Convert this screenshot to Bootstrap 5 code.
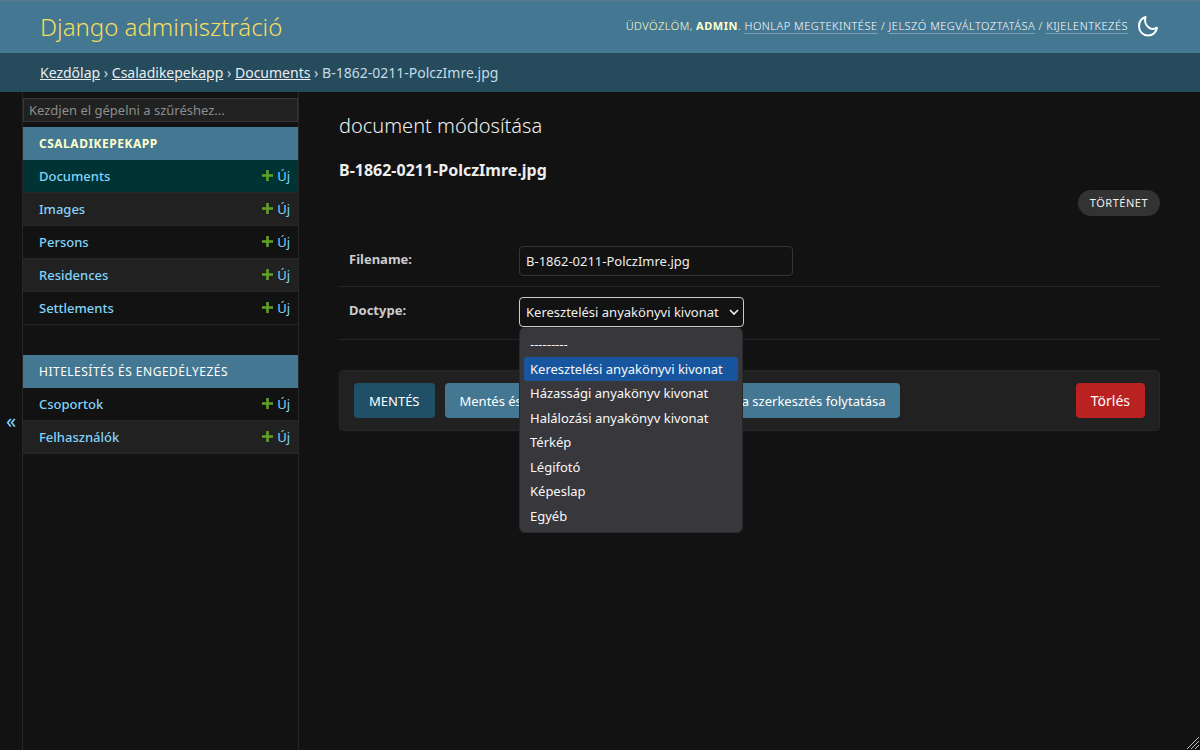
<!DOCTYPE html>
<html lang="hu" data-bs-theme="dark">
<head>
<meta charset="utf-8">
<meta name="viewport" content="width=device-width, initial-scale=1">
<title>B-1862-0211-PolczImre.jpg | document módosítása | Django adminisztráció</title>
<link rel="stylesheet" href="https://cdn.jsdelivr.net/npm/bootstrap@5.3.0/dist/css/bootstrap.min.css">
<style>
:root { --primary: #447792; --hairline: #272727; --line: #353535; --darkened: #212121; --admin-link: #81d4fa; }
body { font-family: "Noto Sans", sans-serif; font-size: 13px; line-height: 18px; background: #121212; color: #eee; }
a { color: var(--admin-link); text-decoration: none; }
.site-header { background: var(--primary); color: #ffc; padding: 8px 40px; height: 53px; border-top: 1px solid #56798b; }
.site-header h1 { font-size: 24px; line-height: 36px; font-weight: 300; }
.site-header h1 a { color: #f5dd5d; }
.header-side { padding: 0 1px 2px 0; }
.user-tools { font-size: 11px; line-height: 16px; font-weight: 300; letter-spacing: .5px; text-transform: uppercase; color: #ffc; }
.user-tools a { color: #fff; border-bottom: 1px solid rgba(255,255,255,.3); }
.user-tools strong { font-weight: 700; }
.theme-toggle { color: #fff; margin-left: 9px; line-height: 0; }
.crumbs { background: #264b5d; color: #c4dce8; padding: 10px 40px; font-size: 14px; line-height: 19px; }
.crumbs a { color: #fff; text-decoration: underline; opacity: .9; }
.nav-toggle { width: 23px; border-right: 1px solid var(--hairline); color: var(--admin-link); font-size: 20px; }
.side { width: 276px; border-right: 1px solid var(--hairline); }
.side-filter { height: 24px; margin: 6px 0 5px; padding: 0 5px; font-size: 13px; color: #eee; background: var(--darkened); border: 1px solid var(--line); border-radius: 0; }
.side-filter::placeholder { color: #8d8d8d; }
.app-list { width: 100%; margin-bottom: 30px; border-collapse: separate; border-spacing: 0; }
.app-list caption { caption-side: top; background: var(--primary); padding: 8px 16px; font-size: 12px; line-height: 17px; letter-spacing: .5px; text-transform: uppercase; }
.app-list caption a { color: #fff; }
.app-list .current-app { font-weight: 700; }
.app-list .current-app a { color: #ffc; }
.app-list th, .app-list td { padding: 7px 8px; height: 33px; border-bottom: 1px solid var(--hairline); }
.app-list th { padding-left: 16px; font-weight: 500; }
.app-list td { text-align: right; }
.app-list tr:nth-child(even) { background: var(--darkened); }
.app-list tr.current-model { background: #033; }
.app-list svg { margin-top: -5px; }
.content { padding: 20px 40px 40px; }
.content h2 { font-size: 20px; line-height: 27px; font-weight: 300; margin-bottom: 20px; }
.content h3 { font-size: 16px; line-height: 22px; font-weight: 700; margin-bottom: 9px; }
.content h2, .content h3 { color: #eee; }
.history { background: #333; color: #eee; border-radius: 15px; padding: 4px 12px; font-size: 11px; line-height: 18px; letter-spacing: .5px; text-transform: uppercase; }
.form-line { padding: 10px; border-bottom: 1px solid var(--hairline); }
.form-line label { width: 170px; padding-top: 4px; font-weight: 700; color: #ccc; }
.field { height: 30px; padding: 5px 6px; font-size: 13px; line-height: 18px; color: #eee; background-color: #121212; border: 1px solid var(--line); border-radius: 4px; }
.name-field { width: 274px; }
.type-field { width: 225px; border-color: #ccc; background-position: right 4px center; background-size: 10px 8px; padding-right: 18px; --bs-form-select-bg-img: none;
  background-image: url("data:image/svg+xml,%3csvg xmlns='http://www.w3.org/2000/svg' viewBox='0 0 10 8'%3e%3cpath d='M1 2l4 4 4-4' fill='none' stroke='%23eee' stroke-width='1.6'/%3e%3c/svg%3e") !important; }
.choices { top: 100%; left: 0; width: 224px; height: 206px; padding: 4px; background: #38373c; border: 1px solid #29292b; border-radius: 6px; z-index: 5; color: #f9f9fa; }
.choices li { flex: 1; padding: 0 6px; border-radius: 3px; white-space: nowrap; }
.choices .chosen { background: #17559f; }
.submit-row { gap: 10px; margin-top: 30px; padding: 12px 14px; background: var(--darkened); border: 1px solid var(--hairline); border-radius: 4px; }
.act { --bs-btn-color: #fff; --bs-btn-hover-color: #fff; --bs-btn-border-width: 0; --bs-btn-border-radius: 4px; height: 35px; padding: 0 15px; font-size: 13px; line-height: 36px; background: var(--primary); }
.act-save { background: #205067; text-transform: uppercase; }
.act-delete { background: #ba2121; font-size: 14px; }
.grip { right: 0; bottom: 0; }
</style>
</head>
<body class="d-flex flex-column min-vh-100 position-relative">
<svg width="0" height="0" class="position-absolute" aria-hidden="true">
  <symbol id="plus" viewBox="0 0 13 13"><path d="M6.500 1v11M1 6.500h11" stroke="#5fa225" stroke-width="2.600"/></symbol>
</svg>

<header class="site-header d-flex justify-content-between">
  <h1 class="m-0"><a href="#">Django adminisztráció</a></h1>
  <div class="header-side d-flex align-items-center align-self-center">
    <div class="user-tools">Üdvözlöm, <strong>admin</strong>.
      <a href="#">Honlap megtekintése</a> / <a href="#">Jelszó megváltoztatása</a> / <a href="#">Kijelentkezés</a></div>
    <button type="button" class="theme-toggle btn p-0 border-0" aria-label="Téma váltása">
      <svg width="22" height="22" viewBox="0 0 22 22" fill="none" stroke="currentColor" stroke-width="2" stroke-linejoin="round"><path d="M8.600 2C5.800 3 2 6 2 11.200C2 16.600 6 20.500 11 20.500C15.800 20.500 19.500 17 20 12.700C18 14 15 14.500 12.200 12.800C8.500 10.500 7.300 6 8.600 2Z"/></svg>
    </button>
  </div>
</header>
<nav class="crumbs" aria-label="Útvonal"><a href="#">Kezdőlap</a> › <a href="#">Csaladikepekapp</a> › <a href="#">Documents</a> › B-1862-0211-PolczImre.jpg</nav>

<div class="d-flex flex-grow-1">
  <button type="button" class="nav-toggle btn border-top-0 border-bottom-0 border-start-0 rounded-0 p-0 flex-shrink-0" aria-label="Navigáció elrejtése">«</button>
  <nav class="side flex-shrink-0" aria-label="Oldalsáv">
    <input type="search" class="side-filter d-block w-100" placeholder="Kezdjen el gépelni a szűréshez..." aria-label="Navigációs elemek szűrése">
    <table class="app-list">
      <caption class="current-app"><a href="#">Csaladikepekapp</a></caption>
      <tbody>
      <tr class="current-model"><th scope="row"><a href="#">Documents</a></th><td><a href="#"><svg width="13" height="13"><use href="#plus"/></svg> Új</a></td></tr>
      <tr><th scope="row"><a href="#">Images</a></th><td><a href="#"><svg width="13" height="13"><use href="#plus"/></svg> Új</a></td></tr>
      <tr><th scope="row"><a href="#">Persons</a></th><td><a href="#"><svg width="13" height="13"><use href="#plus"/></svg> Új</a></td></tr>
      <tr><th scope="row"><a href="#">Residences</a></th><td><a href="#"><svg width="13" height="13"><use href="#plus"/></svg> Új</a></td></tr>
      <tr><th scope="row"><a href="#">Settlements</a></th><td><a href="#"><svg width="13" height="13"><use href="#plus"/></svg> Új</a></td></tr>
      </tbody>
    </table>
    <table class="app-list">
      <caption><a href="#">Hitelesítés és engedélyezés</a></caption>
      <tbody>
      <tr><th scope="row"><a href="#">Csoportok</a></th><td><a href="#"><svg width="13" height="13"><use href="#plus"/></svg> Új</a></td></tr>
      <tr><th scope="row"><a href="#">Felhasználók</a></th><td><a href="#"><svg width="13" height="13"><use href="#plus"/></svg> Új</a></td></tr>
      </tbody>
    </table>
  </nav>

  <main class="content flex-grow-1">
    <h2>document módosítása</h2>
    <h3>B-1862-0211-PolczImre.jpg</h3>
    <div class="d-flex justify-content-end mb-3 pb-1"><a href="#" class="history">Történet</a></div>
    <form>
      <div class="form-line d-flex">
        <label for="filename">Filename:</label>
        <input type="text" id="filename" class="field name-field" value="B-1862-0211-PolczImre.jpg">
      </div>
      <div class="form-line d-flex pb-2">
        <label for="doctype">Doctype:</label>
        <div class="position-relative mb-1">
          <select id="doctype" class="form-select field type-field">
            <option>---------</option>
            <option selected>Keresztelési anyakönyvi kivonat</option>
            <option>Házassági anyakönyv kivonat</option>
            <option>Halálozási anyakönyv kivonat</option>
            <option>Térkép</option>
            <option>Légifotó</option>
            <option>Képeslap</option>
            <option>Egyéb</option>
          </select>
          <ul class="choices list-unstyled position-absolute d-flex flex-column m-0" role="listbox" aria-label="Doctype">
            <li class="d-flex align-items-center" role="option">---------</li>
            <li class="d-flex align-items-center chosen" role="option" aria-selected="true">Keresztelési anyakönyvi kivonat</li>
            <li class="d-flex align-items-center" role="option">Házassági anyakönyv kivonat</li>
            <li class="d-flex align-items-center" role="option">Halálozási anyakönyv kivonat</li>
            <li class="d-flex align-items-center" role="option">Térkép</li>
            <li class="d-flex align-items-center" role="option">Légifotó</li>
            <li class="d-flex align-items-center" role="option">Képeslap</li>
            <li class="d-flex align-items-center" role="option">Egyéb</li>
          </ul>
        </div>
      </div>
      <div class="submit-row d-flex">
        <button type="submit" class="btn act act-save">Mentés</button>
        <button type="submit" class="btn act">Mentés és másik hozzáadása</button>
        <button type="submit" class="btn act">Mentés és a szerkesztés folytatása</button>
        <a href="#" class="btn act act-delete ms-auto">Törlés</a>
      </div>
    </form>
  </main>
</div>
<svg class="grip position-absolute" width="14" height="14" viewBox="0 0 14 14" stroke="#bbb" stroke-width="1" aria-hidden="true"><path d="M1 13L13 1M5 13L13 5M9 13L13 9"/></svg>
<script src="https://cdn.jsdelivr.net/npm/bootstrap@5.3.0/dist/js/bootstrap.bundle.min.js"></script>
</body>
</html>
